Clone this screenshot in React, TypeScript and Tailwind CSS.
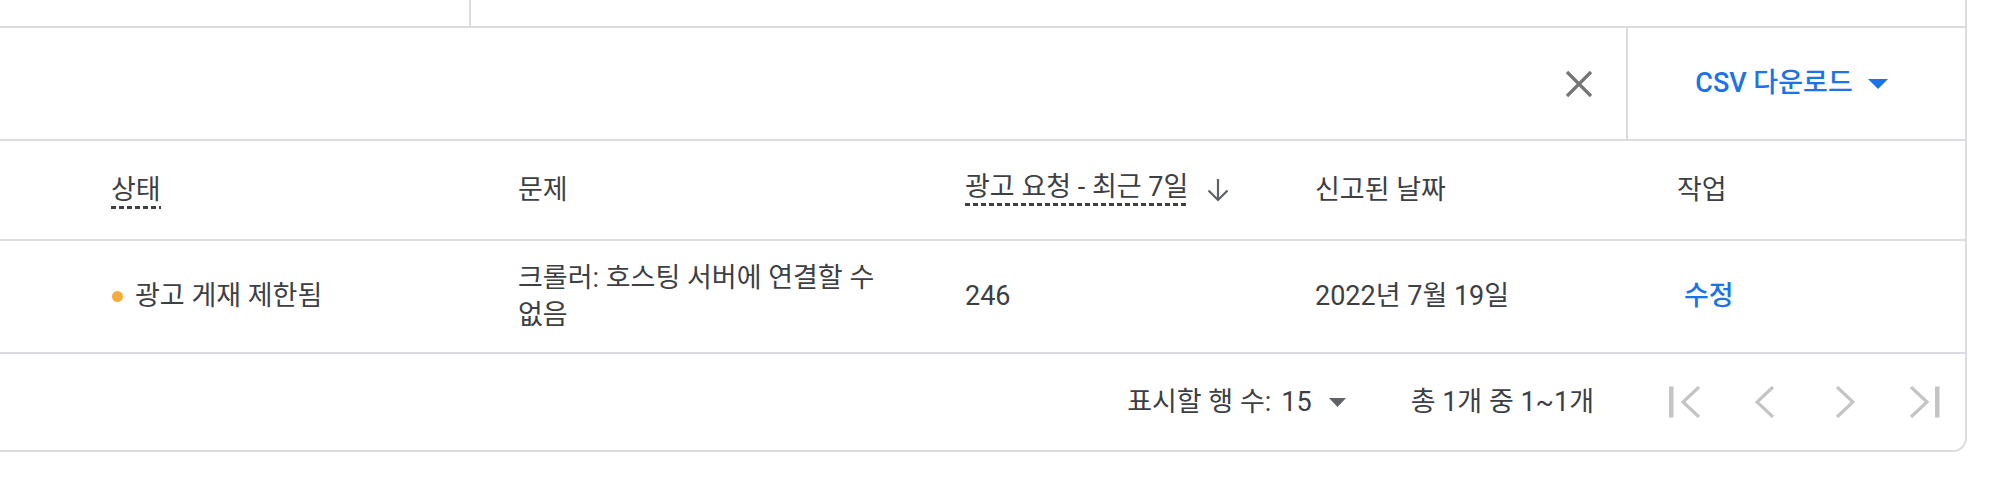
import React from "react";

const line = "border-[#dadce0]";

function Dashed({ children }: { children: React.ReactNode }) {
  return (
    <span className="inline-block bg-[linear-gradient(to_right,#3c4043_62%,transparent_62%)] bg-[length:8px_3px] bg-[position:0_100%] bg-repeat-x pb-[5px] leading-[27px]">
      {children}
    </span>
  );
}

function CloseIcon() {
  return (
    <svg width="28" height="28" viewBox="0 0 28 28" aria-hidden>
      <path d="M2 2L26 26M26 2L2 26" stroke="#757575" strokeWidth="3.2" fill="none" />
    </svg>
  );
}

function Caret({ color, w, h }: { color: string; w: number; h: number }) {
  return (
    <svg width={w} height={h} viewBox={`0 0 ${w} ${h}`} aria-hidden>
      <path d={`M0 0H${w}L${w / 2} ${h}Z`} fill={color} />
    </svg>
  );
}

function SortArrow() {
  return (
    <svg width="22" height="24" viewBox="0 0 22 24" aria-hidden>
      <path d="M11 1V22M1.5 12.5L11 22L20.5 12.5" stroke="#5f6368" strokeWidth="2.2" fill="none" />
    </svg>
  );
}

function PageIcon({ kind }: { kind: "first" | "prev" | "next" | "last" }) {
  const stroke = { stroke: "#c4c4c4", strokeWidth: 3.2, fill: "none" };
  if (kind === "first")
    return (
      <svg width="32" height="32" viewBox="0 0 32 32" aria-hidden>
        <rect x="0" y="0.5" width="4.5" height="31" fill="#c4c4c4" />
        <path d="M30 1L14 16L30 31" {...stroke} />
      </svg>
    );
  if (kind === "last")
    return (
      <svg width="32" height="32" viewBox="0 0 32 32" aria-hidden>
        <path d="M2 1L18 16L2 31" {...stroke} />
        <rect x="26" y="0.5" width="4.5" height="31" fill="#c4c4c4" />
      </svg>
    );
  return (
    <svg width="20" height="32" viewBox="0 0 20 32" aria-hidden>
      <path d={kind === "prev" ? "M18 1L2 16L18 31" : "M2 1L18 16L2 31"} {...stroke} />
    </svg>
  );
}

const cols = "grid grid-cols-[518px_447px_350px_362px_1fr]";

export default function App() {
  return (
    <div className="h-[492px] w-[2004px] overflow-hidden bg-white font-['Roboto','Noto_Sans_CJK_KR',sans-serif] text-[27px] text-[#3c4043]">
      <div className={`w-[1967px] rounded-br-[14px] border-r-2 border-b-2 ${line}`}>
        {/* strip left over from the panel above */}
        <div className={`flex h-[28px] border-b-2 ${line}`}>
          <div className={`w-[471px] border-r-2 ${line}`} />
          <div className="flex-1" />
        </div>

        {/* toolbar */}
        <div className={`flex h-[113px] border-b-2 ${line}`}>
          <div className="flex flex-1 items-center justify-end pr-[33px]">
            <CloseIcon />
          </div>
          <div className={`flex w-[339px] items-center justify-center gap-[15px] border-l-2 pr-[10px] ${line}`}>
            <span className="font-medium text-[#1a73e8]">CSV 다운로드</span>
            <Caret color="#1a73e8" w={20} h={10} />
          </div>
        </div>

        {/* header */}
        <div className={`${cols} h-[100px] items-center border-b-2 ${line}`}>
          <div className="pl-[111px]">
            <Dashed>상태</Dashed>
          </div>
          <div>문제</div>
          <div className="flex items-center gap-[19px]">
            <Dashed>광고 요청 - 최근 7일</Dashed>
            <SortArrow />
          </div>
          <div>신고된 날짜</div>
          <div>작업</div>
        </div>

        {/* row */}
        <div className={`${cols} h-[113px] items-center border-b-2 ${line}`}>
          <div className="flex items-center gap-[12px] pl-[112px]">
            <span className="h-[11px] w-[11px] rounded-full bg-[#f2ad3c]" />
            <span>광고 게재 제한됨</span>
          </div>
          <div className="w-[395px] break-keep leading-[37px]">크롤러: 호스팅 서버에 연결할 수 없음</div>
          <div>246</div>
          <div>2022년 7월 19일</div>
          <div className="pl-[7px] font-medium text-[#1a73e8]">수정</div>
        </div>

        {/* footer */}
        <div className="flex h-[96px] items-center justify-end">
          <span>표시할 행 수:</span>
          <span className="ml-[10px]">15</span>
          <span className="ml-[17px] flex">
            <Caret color="#5f6368" w={17} h={9} />
          </span>
          <span className="ml-[65px]">총 1개 중 1~1개</span>
          <div className="ml-[51px] flex">
            <div className="flex w-[80px] justify-center">
              <PageIcon kind="first" />
            </div>
            <div className="flex w-[80px] justify-center">
              <PageIcon kind="prev" />
            </div>
            <div className="flex w-[80px] justify-center">
              <PageIcon kind="next" />
            </div>
            <div className="flex w-[80px] justify-center">
              <PageIcon kind="last" />
            </div>
          </div>
        </div>
      </div>
    </div>
  );
}
